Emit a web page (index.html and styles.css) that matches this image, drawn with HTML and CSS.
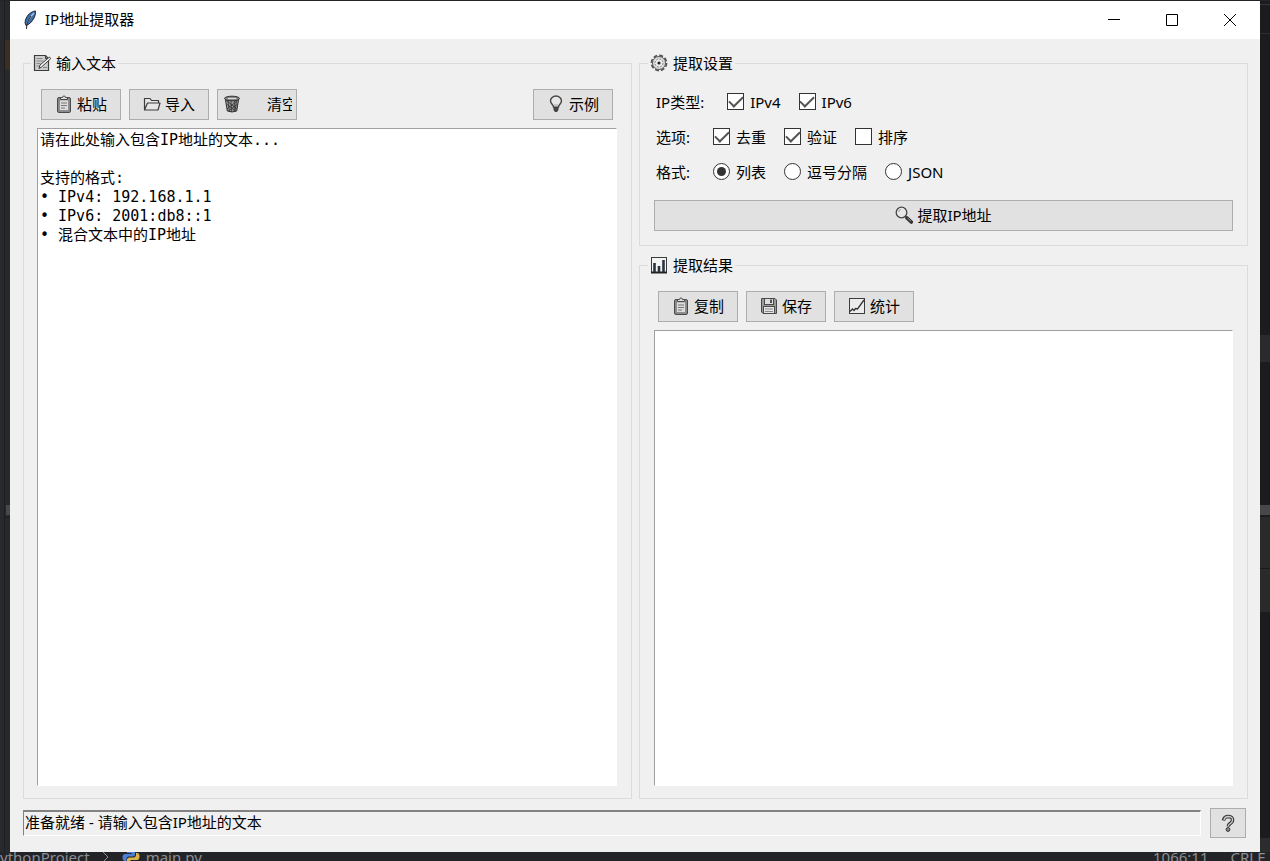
FILE: index.html
```html
<!DOCTYPE html>
<html lang="zh-CN">
<head>
    <meta charset="UTF-8">
    <meta name="viewport" content="width=device-width, initial-scale=1.0">
    <title>IP地址提取器</title>
    <link rel="stylesheet" href="styles.css">
</head>
<body>

<!-- icônes partagées -->
<svg class="sprite" aria-hidden="true">
    <symbol id="i-clipboard" viewBox="0 0 18 18">
        <rect x="2.5" y="2.5" width="13" height="15" rx="1.5" fill="#8a8a8a" stroke="#4a4a4a"/>
        <rect x="4.5" y="5" width="9" height="10.5" fill="#dcdcdc" stroke="#777" stroke-width=".6"/>
        <path d="M5.5 4.5V2.5H7.5a1.5 1.5 0 0 1 3 0H12.5v2z" fill="#ddd" stroke="#4a4a4a"/>
        <path d="M6 8h6M6 10.5h6M6 13h4" stroke="#777" fill="none"/>
    </symbol>
    <symbol id="i-folder" viewBox="0 0 18 18">
        <path d="M1.5 15V3.500h5.500l1.500 2h7v2.500M1.500 15L4.500 8h12.500l-2 7z" fill="#e6e6e6" stroke="#3c3c3c" stroke-width="1.200" stroke-linejoin="round"/>
    </symbol>
    <symbol id="i-trash" viewBox="0 0 18 18">
        <path d="M2.5 5h13l-1.800 11q-4.700 2-9.400 0z" fill="#999" stroke="#333"/>
        <path d="M5 6l1.500 10.500M8 6l.5 11M11.500 6l-.5 11M13.500 6l-1.500 10.500M3.500 9l9 7M14.500 9l-9 7M4 6l10 8M14 6L4 14" stroke="#333" stroke-width=".8" fill="none"/>
        <ellipse cx="9" cy="3.500" rx="7.500" ry="2.300" fill="#888" stroke="#333"/>
        <path d="M5 3.500h8" stroke="#ddd"/>
    </symbol>
    <symbol id="i-bulb" viewBox="0 0 18 18">
        <path d="M6.500 12c0-2.500-3-3-3-6a5.500 5 0 0 1 11 0c0 3-3 3.500-3 6z" fill="#e8e8e8" stroke="#444" stroke-width="1.400"/>
        <path d="M8 12V9M10 12V9" stroke="#aaa"/>
        <path d="M6.500 12h5v3l-1.500 2H8l-1.500-2z" fill="#444"/>
    </symbol>
    <symbol id="i-memo" viewBox="0 0 18 18">
        <path d="M1.500 1.500h11l3 3v12h-14z" fill="#cdcdcd" stroke="#3c3c3c" stroke-width="1.200"/>
        <path d="M12.500 1.500v3h3" fill="none" stroke="#3c3c3c"/>
        <path d="M3.500 4.500h6M3.500 7h7M3.500 9.500h4M3.500 12h3M10 13.500h4" stroke="#888"/>
        <path d="M6 14.500l1-3.500 9.500-8 1.200 1.700-9.200 8.300z" fill="#f5f5f5" stroke="#3c3c3c"/>
    </symbol>
    <symbol id="i-gear" viewBox="0 0 18 18">
        <circle cx="9" cy="9" r="7.500" fill="none" stroke="#555" stroke-width="1.800" stroke-dasharray="3.900 1.990"/>
        <circle cx="9" cy="9" r="6.500" fill="#ddd" stroke="#555"/>
        <circle cx="9" cy="9" r="4" fill="#eee" stroke="#888" stroke-dasharray="2 1.100"/>
        <circle cx="9" cy="9" r="1.600" fill="#222"/>
    </symbol>
    <symbol id="i-search" viewBox="0 0 18 18">
        <circle cx="6.500" cy="6.500" r="5.300" fill="#e8e8e8" stroke="#444" stroke-width="1.300"/>
        <path d="M3.500 6a3 3 0 0 1 2.500-2.500" stroke="#999" fill="none"/>
        <path d="M10.500 10.500l1.500 1.500" stroke="#444" stroke-width="1.500"/>
        <path d="M12 12l4.300 4" stroke="#333" stroke-width="3.600" stroke-linecap="round"/>
        <path d="M12.500 12l3.500 3.200" stroke="#999"/>
    </symbol>
    <symbol id="i-chart" viewBox="0 0 18 18">
        <rect x="1.500" y="1.500" width="15" height="15" fill="#f4f4f4" stroke="#3c3c3c"/>
        <path d="M1 16.500h16" stroke="#222" stroke-width="2"/>
        <path d="M4.500 16V7M9 16v-6M13.500 16V4" stroke="#2c3340" stroke-width="2.600"/>
    </symbol>
    <symbol id="i-save" viewBox="0 0 18 18">
        <path d="M1.500 1.500h13.500l1.500 1.500v13.500h-13.500l-1.500-1.500z" fill="#999" stroke="#4a4a4a"/>
        <rect x="4.500" y="1.500" width="9" height="6" fill="#ddd" stroke="#4a4a4a"/>
        <rect x="10" y="2.500" width="2" height="3.500" fill="#555"/>
        <rect x="3.500" y="9.500" width="11" height="7" fill="#e6e6e6" stroke="#4a4a4a"/>
        <path d="M5 12h8M5 14.500h8" stroke="#888"/>
    </symbol>
    <symbol id="i-trend" viewBox="0 0 18 18">
        <rect x="1.500" y="1.500" width="15" height="15" fill="#ececec" stroke="#3c3c3c"/>
        <path d="M2 14.500l2.500-2.500 1.500 1.500 1.500-2 2 .5L16 3" fill="none" stroke="#333" stroke-width="1.300"/>
    </symbol>
    <symbol id="i-help" viewBox="0 0 18 18">
        <path d="M4.500 6.500q.5-4 5-4 4.500.3 4 4-.3 2-2.500 3.200-1.500.8-1.700 2.800" fill="none" stroke="#3a3a3a" stroke-width="3.600"/>
        <path d="M5 6q.5-3.500 4.500-3.500 4.500.3 4 4-.3 2-2.500 3.200-1.500.8-1.700 2.300" fill="none" stroke="#ccc" stroke-width="1.300"/>
        <circle cx="9" cy="15.500" r="1.900" fill="#888" stroke="#333"/>
    </symbol>
</svg>

<div class="desktop">
    <div class="edge edge-left"></div>

    <div class="window">
        <header class="titlebar">
            <svg class="feather" viewBox="0 0 14 20">
                <path d="M12.500 1C8 1.500 4 5 2.500 10c-.6 2-.5 4 .5 5.500 3-1 6-3.500 8-7.500 1.200-2.500 1.800-5 1.500-7z" fill="#3d6da8" stroke="#1c2736"/>
                <path d="M11 3C8 6 5 10 4 14" stroke="#a9c7e8" stroke-width="1.200" fill="none"/>
                <path d="M8 6C5 10 3.500 14 3.500 19" stroke="#222" fill="none"/>
            </svg>
            <h1>IP地址提取器</h1>
            <div class="window-controls">
                <button type="button" aria-label="最小化"><svg viewBox="0 0 12 12"><path d="M0 5.500h12"/></svg></button>
                <button type="button" aria-label="最大化"><svg viewBox="0 0 12 12"><path d="M.5.5h11v11H.5z"/></svg></button>
                <button type="button" aria-label="关闭"><svg viewBox="0 0 12 12"><path d="M0 0l12 12M12 0L0 12"/></svg></button>
            </div>
        </header>

        <main>
            <fieldset class="frame input-frame">
                <legend><svg class="icon"><use href="#i-memo"/></svg>输入文本</legend>
                <div class="toolbar">
                    <button type="button" class="btn"><svg class="icon"><use href="#i-clipboard"/></svg>粘贴</button>
                    <button type="button" class="btn"><svg class="icon"><use href="#i-folder"/></svg>导入</button>
                    <button type="button" class="btn btn-clear"><svg class="icon"><use href="#i-trash"/></svg><span>清空</span></button>
                    <button type="button" class="btn btn-example"><svg class="icon"><use href="#i-bulb"/></svg>示例</button>
                </div>
                <textarea class="text-area" aria-label="输入文本" spellcheck="false">请在此处输入包含IP地址的文本...

支持的格式:
• IPv4: 192.168.1.1
• IPv6: 2001:db8::1
• 混合文本中的IP地址</textarea>
            </fieldset>

            <div class="right">
                <fieldset class="frame settings-frame">
                    <legend><svg class="icon"><use href="#i-gear"/></svg>提取设置</legend>
                    <div class="option-row">
                        <span class="option-name">IP类型:</span>
                        <label><input type="checkbox" checked>IPv4</label>
                        <label><input type="checkbox" checked>IPv6</label>
                    </div>
                    <div class="option-row">
                        <span class="option-name">选项:</span>
                        <label><input type="checkbox" checked>去重</label>
                        <label><input type="checkbox" checked>验证</label>
                        <label><input type="checkbox">排序</label>
                    </div>
                    <div class="option-row">
                        <span class="option-name">格式:</span>
                        <label><input type="radio" name="format" checked>列表</label>
                        <label><input type="radio" name="format">逗号分隔</label>
                        <label><input type="radio" name="format">JSON</label>
                    </div>
                    <button type="button" class="btn btn-extract"><svg class="icon"><use href="#i-search"/></svg>提取IP地址</button>
                </fieldset>

                <fieldset class="frame result-frame">
                    <legend><svg class="icon"><use href="#i-chart"/></svg>提取结果</legend>
                    <div class="toolbar">
                        <button type="button" class="btn"><svg class="icon"><use href="#i-clipboard"/></svg>复制</button>
                        <button type="button" class="btn"><svg class="icon"><use href="#i-save"/></svg>保存</button>
                        <button type="button" class="btn"><svg class="icon"><use href="#i-trend"/></svg>统计</button>
                    </div>
                    <textarea class="text-area" aria-label="提取结果" spellcheck="false"></textarea>
                </fieldset>
            </div>
        </main>

        <footer class="statusbar">
            <div class="status">准备就绪 - 请输入包含IP地址的文本</div>
            <button type="button" class="btn btn-help" aria-label="帮助"><svg class="icon"><use href="#i-help"/></svg></button>
        </footer>
    </div>

    <div class="edge edge-right"></div>
</div>

<!-- barre de l'éditeur derrière la fenêtre -->
<div class="editor-bar">
    <span>ythonProject</span>
    <svg class="chevron" viewBox="0 0 8 12"><path d="M1 1l5 5-5 5"/></svg>
    <svg class="python" viewBox="0 0 18 18">
        <path d="M9 1C5 1 5 2.500 5 5h4.500v1H3C1 6 .5 8 .5 9.500S1 13 3 13h1.500v-2c0-1.500 1-2.500 2.500-2.500h4c1.200 0 2-1 2-2V4c0-2-1.500-3-4-3z" fill="#4a80d8"/>
        <path d="M9 17c4 0 4-1.500 4-4H8.500v-1H15c2 0 2.500-2 2.500-3.500S17 5 15 5h-1v2c0 1.500-1 2.500-2.500 2.500h-4c-1.200 0-2.500 1-2.500 2V14c0 2 1.500 3 4 3z" fill="#d9b44a"/>
    </svg>
    <span>main.py</span>
    <span class="caret-pos">1066:11</span>
    <span>CRLF</span>
</div>

</body>
</html>
```
FILE: styles.css
```css
* {
    box-sizing: border-box;
}

body {
    margin: 0;
    height: 100vh;
    display: flex;
    flex-direction: column;
    overflow: hidden;
    background-color: #232427;
    color: #000;
    font-family: "Noto Sans", "Noto Sans CJK SC", sans-serif;
    font-size: 15px;
    line-height: 20px;
}

button, input {
    font: inherit;
    color: inherit;
    margin: 0;
}

.sprite {
    display: none;
}

.icon {
    width: 18px;
    height: 18px;
    flex: none;
}

/* FENETRE */
.desktop {
    flex: 1;
    min-height: 0;
    display: flex;
    padding-top: 1px;
}

.edge {
    width: 10px;
    flex: none;
}

.edge-left {
    background:
        linear-gradient(#3a2f22, #3a2f22) 5px 39px / 5px 30px no-repeat,
        linear-gradient(#47484a, #47484a) 6px 504px / 4px 10px no-repeat,
        linear-gradient(#1c1d1f, #1c1d1f) 5px 516px / 5px 1px no-repeat,
        linear-gradient(#1c1d1f, #1c1d1f) 4px 0 / 1px 100% no-repeat,
        #27292c;
}

.edge-right {
    background:
        linear-gradient(#333437, #333437) 0 3px / 10px 1px no-repeat,
        linear-gradient(#2b2c2e, #2b2c2e) 0 32px / 10px 1px no-repeat,
        linear-gradient(#2a2b2d, #2a2b2d) 0 334px / 10px 27px no-repeat,
        linear-gradient(#47484a, #47484a) 0 504px / 10px 10px no-repeat,
        linear-gradient(#1a1a1b, #1a1a1b) 0 567px / 10px 1px no-repeat,
        linear-gradient(#2a2a2b, #2a2a2b) 0 516px / 10px 95px no-repeat,
        linear-gradient(#2b2c2e, #2b2c2e) 0 100% / 10px 14px no-repeat,
        #1b1c1e;
}

.window {
    flex: 1;
    min-width: 0;
    display: flex;
    flex-direction: column;
    background-color: #f0f0f0;
}

.titlebar {
    display: flex;
    align-items: center;
    height: 38px;
    padding: 0 1px 0 13px;
    background-color: #fff;
}

.titlebar h1 {
    margin: 0 auto 0 8px;
    padding-bottom: 2px;
    font-size: 15px;
    font-weight: normal;
}

.feather {
    width: 14px;
    height: 20px;
}

.window-controls {
    display: flex;
    align-self: stretch;
}

.window-controls button {
    display: flex;
    align-items: center;
    justify-content: center;
    width: 58px;
    padding: 0;
    border: none;
    background: none;
}

.window-controls svg {
    width: 12px;
    height: 12px;
    fill: none;
    stroke: #000;
}

/* CONTENU */
main {
    flex: 1;
    min-height: 0;
    display: grid;
    grid-template-columns: 1fr 1fr;
    gap: 7px;
    padding: 14px 12px 0 13px;
}

.right {
    display: flex;
    flex-direction: column;
    gap: 9px;
    min-height: 0;
}

.frame {
    display: flex;
    flex-direction: column;
    min-width: 0;
    margin: 0;
    padding: 16px 14px 12px;
    border: 1px solid #dcdcdc;
}

.input-frame {
    padding-left: 13px;
}

.frame legend {
    display: flex;
    align-items: center;
    gap: 5px;
    height: 20px;
    margin-left: -6px;
    padding: 0 2px 1px;
}

.result-frame {
    flex: 1;
    min-height: 0;
}

.toolbar {
    display: flex;
    gap: 8px;
    padding: 0 4px;
    margin-bottom: 8px;
}

.btn {
    display: flex;
    align-items: center;
    justify-content: center;
    gap: 4px;
    width: 80px;
    height: 31px;
    padding: 0 0 1px;
    border: 1px solid #adadad;
    background-color: #e1e1e1;
    white-space: nowrap;
}

.btn-clear {
    justify-content: flex-start;
    gap: 26px;
    padding: 0 4px 1px 5px;
}

.btn-clear span {
    min-width: 0;
    overflow: hidden;
}

.btn-example {
    margin-left: auto;
}

.btn-extract {
    width: 100%;
    margin-top: 11px;
}

.text-area {
    flex: 1;
    width: 100%;
    min-height: 0;
    margin: 0;
    padding: 2px;
    border: 1px solid;
    border-color: #a0a0a0 #fff #fff #a0a0a0;
    border-radius: 0;
    outline: none;
    resize: none;
    background-color: #fff;
    color: #000;
    font-family: "DejaVu Sans Mono", "Noto Sans CJK SC", monospace;
    font-size: 15px;
    line-height: 19px;
}

/* OPTIONS */
.option-row {
    display: flex;
    align-items: center;
    gap: 18px;
    height: 35px;
    padding-left: 2px;
}

.settings-frame {
    padding-top: 11px;
    padding-bottom: 14px;
}

.option-name {
    margin-right: 5px;
}

.option-row label {
    display: flex;
    align-items: center;
    gap: 6px;
}

.option-row input {
    appearance: none;
    display: grid;
    place-items: center;
    width: 17px;
    height: 17px;
    border: 1px solid #333;
    background-color: #fff;
}

.option-row input[type="radio"] {
    border-radius: 50%;
}

.option-row input[type="checkbox"]:checked::before {
    content: "";
    width: 12px;
    height: 6px;
    border: solid #555;
    border-width: 0 0 2px 2px;
    transform: translateY(-2px) rotate(-45deg);
}

.option-row input[type="radio"]:checked::before {
    content: "";
    width: 9px;
    height: 9px;
    border-radius: 50%;
    background-color: #333;
}

/* BARRE D'ETAT */
.statusbar {
    display: flex;
    align-items: center;
    gap: 9px;
    padding: 9px 14px 14px 13px;
}

.status {
    flex: 1;
    height: 26px;
    padding-left: 1px;
    border: 1px solid;
    border-width: 2px 1px 1px;
    border-color: #828282 #fff #fff #828282;
    line-height: 20px;
}

.btn-help {
    width: 36px;
    height: 30px;
}

/* EDITEUR */
.editor-bar {
    display: flex;
    align-items: center;
    height: 9px;
    padding-right: 5px;
    overflow: hidden;
    color: #8c8f94;
    font-size: 15px;
}

.chevron {
    width: 8px;
    height: 12px;
    margin: 0 12px;
    fill: none;
    stroke: #8c8f94;
}

.python {
    width: 18px;
    height: 18px;
    margin-right: 6px;
}

.caret-pos {
    margin-left: auto;
    margin-right: 22px;
}
```
